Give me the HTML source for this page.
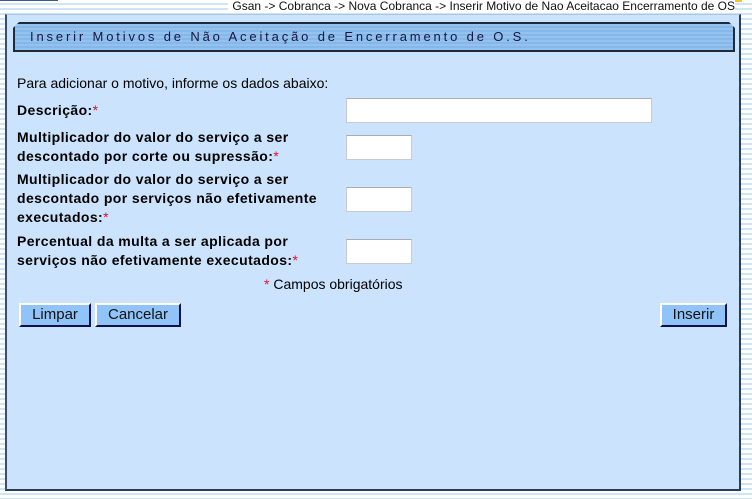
<!DOCTYPE html>
<html><head><meta charset="utf-8"><style>
*{margin:0;padding:0;box-sizing:border-box}
body{width:752px;height:499px;overflow:hidden;position:relative;font-family:"Liberation Sans",Arial,sans-serif;
background:repeating-linear-gradient(to bottom,#ffffff 0 3px,#cfe5f6 3px 5px);}
.bc{position:absolute;right:17px;top:-1px;font-size:12px;color:#111;background:#fff;padding-left:4px;line-height:14px}
.orange{position:absolute;left:560px;top:0;width:182px;height:2px;background:#f7c22b}
.tl{position:absolute;left:0;top:0;width:58px;height:1px;background:#3c5a8a}
.panel{position:absolute;left:5px;top:14px;width:736px;height:477px;background:#cbe3fc;border:2px solid #2b3d55;border-top:1px solid #a9c6e3;border-left-color:#3a4e6a}
.hdr{position:absolute;left:13px;top:22px;width:722px;height:30px;border:2px solid #1f2a3a;
background:repeating-linear-gradient(to bottom,#93c2ef 0 2px,#86b7e8 2px 4px);
clip-path:polygon(6px 0,calc(100% - 6px) 0,100% 6px,100% 100%,0 100%,0 6px);}
.hdr span{position:absolute;left:15px;top:5px;font-size:13px;letter-spacing:2.85px;color:#16163f}
.t{position:absolute;font-size:14px;color:#000;line-height:19px}
b{font-weight:bold;letter-spacing:0.4px}
.r{color:#e0102a}
.in{position:absolute;background:#fff;border:1px solid #c8ccd2;border-top-color:#a9adb3}
.btn{position:absolute;height:24px;background:#90c4f8;border:2px solid;border-color:#fff #12124a #12124a #fff;font-size:15px;color:#111;text-align:center;line-height:20px}
</style></head><body>
<div class="tl"></div><div class="orange"></div>
<div class="bc">Gsan -&gt; Cobranca -&gt; Nova Cobranca -&gt; Inserir Motivo de Nao Aceitacao Encerramento de OS</div>
<div class="panel"></div>
<div class="hdr"><span>Inserir Motivos de Não Aceitação de Encerramento de O.S.</span></div>
<div class="t" style="left:17px;top:74px">Para adicionar o motivo, informe os dados abaixo:</div>
<div class="t" style="left:17px;top:101px"><b>Descrição:</b><span class="r">*</span></div>
<div class="t" style="left:17px;top:128px"><b>Multiplicador do valor do serviço a ser<br>descontado por corte ou supressão:</b><span class="r">*</span></div>
<div class="t" style="left:17px;top:170px"><b>Multiplicador do valor do serviço a ser<br>descontado por serviços não efetivamente<br>executados:</b><span class="r">*</span></div>
<div class="t" style="left:17px;top:232px"><b>Percentual da multa a ser aplicada por<br>serviços não efetivamente executados:</b><span class="r">*</span></div>
<div class="in" style="left:346px;top:98px;width:306px;height:25px"></div>
<div class="in" style="left:346px;top:135px;width:66px;height:25px"></div>
<div class="in" style="left:346px;top:187px;width:66px;height:25px"></div>
<div class="in" style="left:346px;top:239px;width:66px;height:25px"></div>
<div class="t" style="left:264px;top:275px"><span class="r">*</span> Campos obrigatórios</div>
<div class="btn" style="left:19px;top:303px;width:72px">Limpar</div>
<div class="btn" style="left:95px;top:303px;width:86px">Cancelar</div>
<div class="btn" style="left:660px;top:303px;width:67px">Inserir</div>
</body></html>
